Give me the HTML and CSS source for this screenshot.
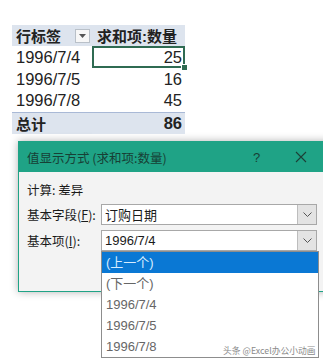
FILE: index.html
```html
<!DOCTYPE html>
<html>
<head>
    <meta charset="utf-8">
    <title>值显示方式</title>
    <link rel="stylesheet" href="styles.css">
</head>
<body>

<table class="pivot">
    <tr class="pivot-head">
        <th class="col-label"><div class="head-cell"><span>行标签</span><span class="filter-btn"><svg width="7" height="4" viewBox="0 0 7 4"><path d="M0 0 L7 0 L3.5 4 Z" fill="#555"/></svg></span></div></th>
        <th class="col-value">求和项:数量</th>
    </tr>
    <tr><td class="col-label">1996/7/4</td><td class="col-value selected">25<span class="fill-handle"></span></td></tr>
    <tr><td class="col-label">1996/7/5</td><td class="col-value">16</td></tr>
    <tr><td class="col-label">1996/7/8</td><td class="col-value">45</td></tr>
    <tr class="pivot-total"><td class="col-label">总计</td><td class="col-value">86</td></tr>
</table>

<div class="dialog">
    <div class="titlebar">
        <span class="title">值显示方式 (求和项:数量)</span>
        <span class="help">?</span>
        <span class="close"><svg width="12" height="12" viewBox="0 0 12 12"><path d="M1 1 L11 11 M11 1 L1 11" stroke="#1d3f36" stroke-width="1.1"/></svg></span>
    </div>
    <div class="dialog-body">
        <div class="calc">计算: 差异</div>
        <div class="field-row">
            <label>基本字段(<u>F</u>):</label>
            <div class="combo">
                <span class="combo-text">订购日期</span>
                <span class="combo-btn"><svg width="9" height="5" viewBox="0 0 9 5"><path d="M0.5 0.5 L4.5 4.5 L8.5 0.5" fill="none" stroke="#555" stroke-width="1"/></svg></span>
            </div>
        </div>
        <div class="field-row">
            <label>基本项(<u>I</u>):</label>
            <div class="combo">
                <span class="combo-text">1996/7/4</span>
                <span class="combo-btn"><svg width="9" height="5" viewBox="0 0 9 5"><path d="M0.5 0.5 L4.5 4.5 L8.5 0.5" fill="none" stroke="#555" stroke-width="1"/></svg></span>
                <ul class="dropdown">
                    <li class="active">(上一个)</li>
                    <li>(下一个)</li>
                    <li>1996/7/4</li>
                    <li>1996/7/5</li>
                    <li>1996/7/8</li>
                </ul>
            </div>
        </div>
    </div>
</div>

<div class="watermark">头条 @Excel办公小动画</div>

</body>
</html>
```

FILE: styles.css
```css
html, body { overflow: hidden;
}

body {
    margin: 0; background-color: #fff; font-family: "Liberation Sans", "Noto Sans CJK SC", sans-serif; color: #222; width: 323px; height: 361px;
}

.pivot { border-collapse: collapse; margin-left: 12px; margin-top: 25px; font-size: 16.5px;
}

.pivot td, .pivot th { padding: 0; height: 22px;
}

.col-label { width: 80px; padding-left: 4px !important; text-align: left; box-sizing: border-box;
}

.col-value { width: 93px; text-align: right; padding-right: 3px !important; box-sizing: border-box; position: relative;
}

.pivot-head th { background-color: #dde4ee; height: 21px; font-weight: bold; font-size: 15px; text-align: left;
}

.pivot-head .col-value { padding-left: 5px; text-align: left;
}

.head-cell { display: flex; justify-content: space-between; align-items: center; padding-right: 2px;
}

.filter-btn { width: 13px; height: 12px; border: 1px solid #b9c0c8; background-color: #f7f7f7; display: flex; align-items: center; justify-content: center;
}

.selected { outline: 2px solid #2f6b52; outline-offset: -2px;
}

.fill-handle { position: absolute; right: -3px; bottom: -3px; width: 5px; height: 5px; background-color: #2f6b52; border: 1px solid #fff;
}

.pivot-total td { background-color: #dde4ee; border-top: 1px solid #a9b9d6; font-weight: bold; font-size: 15px;
}

.pivot-total .col-value { font-size: 16.5px;
}

.dialog { margin-left: 18px; margin-top: 7px; width: 312px; border: 1px solid #1fa386; background-color: #f3f3f3; box-shadow: 0 0 8px rgba(0, 0, 0, 0.3); font-family: "Noto Sans CJK SC", "Liberation Sans", sans-serif; font-size: 12.5px; color: #1a1a1a;
}

.titlebar { height: 30px; background-color: #1fa386; display: flex; align-items: center; padding-left: 8px; color: #173f35;
}

.title { flex: 1;
}

.help { width: 20px; font-family: "Liberation Sans", sans-serif; font-size: 13px; margin-right: 22px;
}

.close { width: 36px; display: flex; align-items: center;
}

.dialog-body { height: 119px; padding: 9px 8px 0 8px; box-sizing: border-box;
}

.calc { height: 18px; line-height: 18px;
}

.field-row { display: flex; align-items: center; margin-top: 5px;
}

.field-row label { width: 74px;
}

.combo { position: relative; width: 216px; height: 21px; box-sizing: border-box; border: 1px solid #a8a8a8; background-color: #fff; display: flex; align-items: center;
}

.combo-text { flex: 1; padding-left: 3px; font-size: 13px; font-family: "Liberation Sans", "Noto Sans CJK SC", sans-serif;
}

.combo-btn { width: 18px; height: 19px; background-color: #e3e3e3; border-left: 1px solid #bdbdbd; display: flex; align-items: center; justify-content: center;
}

.dropdown { position: absolute; left: -1px; top: 20px; width: 216px; margin: 0; padding: 0; list-style: none; background-color: #fff; border: 1px solid #8d8d8d; font-family: "Liberation Sans", "Noto Sans CJK SC", sans-serif; font-size: 13px; color: #666;
}

.dropdown li { height: 21px; line-height: 21px; padding-left: 4px;
}

.dropdown .active { background-color: #0a78d4; color: #d6ecff;
}

.watermark { position: absolute; left: 223px; top: 344px; font-family: "Noto Sans CJK SC", sans-serif; font-size: 8.8px; color: #8a8a8a; white-space: nowrap;
}
```
